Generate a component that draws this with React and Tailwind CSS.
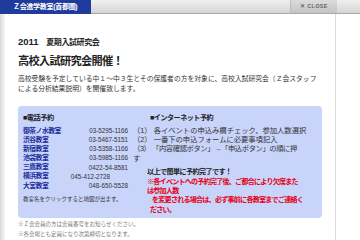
// App.jsx - Z会進学教室 summer seminar popup
import React from 'react';

const phones = [
  { name: '御茶ノ水教室', tel: '03-5295-1166', pad: 'pr-0' },
  { name: '渋谷教室', tel: '03-5467-5151', pad: 'pr-0' },
  { name: '新宿教室', tel: '03-5358-1166', pad: 'pr-0' },
  { name: '池袋教室', tel: '03-5985-1166', pad: 'pr-0' },
  { name: '三鷹教室', tel: '0422-54-8581', pad: 'pr-0' },
  { name: '横浜教室', tel: '045-412-2728', pad: 'pr-[18px]' },
  { name: '大宮教室', tel: '048-650-5528', pad: 'pr-0' },
];

const App = () => {
  return (
    <div className="w-[360px] h-[240px] overflow-hidden bg-white text-[#333] font-['Liberation_Sans','Noto_Sans_CJK_JP',sans-serif]">
      {/* Header bar */}
      <div className="flex h-[14px]">
        <div className="w-[91px] bg-[#1f3c9c] text-white text-[7px] font-bold leading-[14px] pl-[13px] whitespace-nowrap tracking-[-0.3px]">
          Ｚ会進学教室(首都圏)
        </div>
        <div className="flex-1 flex bg-gradient-to-b from-[#f0f0f0] to-[#d4d4d4] border-b border-[#a8a8a8]">
          <div className="ml-auto mr-[23px] w-[47px] bg-gradient-to-b from-[#dcdcdc] to-[#c4c4c4] border-l border-[#bcbcbc] text-[#666] text-[5.5px] font-bold leading-[13px] text-center tracking-[0.3px]">
            ✕ CLOSE
          </div>
        </div>
      </div>

      {/* Body */}
      <div className="flex h-[226px]">
        <div className="w-[5px] bg-gradient-to-r from-[#d9d9d9] to-[#f7f7f7]" />
        <div className="w-[331px] border-r border-[#dcdcdc] pl-[13px]">
          <h2 className="mt-[23px] text-[8px] leading-[10px] font-bold text-[#222] whitespace-nowrap tracking-[-0.4px]">
            <span className="text-[9.5px] tracking-normal">2011</span>　夏期入試研究会
          </h2>
          <h1 className="mt-[6px] text-[11.2px] leading-[14px] font-bold text-[#222] whitespace-nowrap tracking-[-0.7px]">
            高校入試研究会開催！
          </h1>
          <p className="mt-[6px] text-[6.8px] leading-[10px] text-[#333] whitespace-nowrap">
            高校受験を予定している中１～中３生とその保護者の方を対象に、高校入試研究会（Ｚ会スタッフ<br />
            による分析結果説明）を開催致します。
          </p>

          {/* Reservation box */}
          <div className="mt-[12px] w-[304px] h-[112px] rounded-[4px] bg-[#c9d4fa] pt-[7px] pl-[5px] flex">
            <div className="w-[105px] flex flex-col">
              <div className="text-[7.2px] leading-[10px] font-bold text-[#222] tracking-[-0.5px]">■電話予約</div>
              <div className="mt-[3px] flex flex-col">
                {phones.map((p) => (
                  <div key={p.name} className="flex items-center h-[9.2px]">
                    <span className="text-[6.8px] font-bold text-[#1b2f9e] whitespace-nowrap tracking-[-0.5px]">{p.name}</span>
                    <span className={`ml-auto text-[6.3px] text-[#333] whitespace-nowrap ${p.pad}`}>{p.tel}</span>
                  </div>
                ))}
              </div>
              <div className="mt-[5px] text-[5.5px] leading-[8px] text-[#333] whitespace-nowrap">
                教室名をクリックすると地図が出ます。
              </div>
            </div>

            <div className="ml-[5px] w-[189px] flex flex-col text-[7.1px] text-[#333] whitespace-nowrap">
              <div className="pl-[17px] leading-[10px] font-bold text-[#222] tracking-[-0.5px]">■インターネット予約</div>
              <div className="mt-[3px] leading-[9.2px] text-[7.3px]">
                <div>（1） 各イベントの申込み欄チェック、参加人数選択</div>
                <div>（2） 一番下の申込フォームに必要事項記入</div>
                <div className="tracking-[-0.4px]">（3） 「内容確認ボタン」→「申込ボタン」の順に押</div>
                <div>す</div>
              </div>
              <div className="mt-[5.5px] pl-[14px] leading-[9.3px] font-bold tracking-[-0.8px]">
                <div className="text-[#222] tracking-[-0.6px]">以上で簡単に予約完了です！</div>
                <div className="text-[#e60012]">
                  <div>※各イベントへの予約完了後、ご都合により欠席また</div>
                  <div>は参加人数</div>
                  <div className="pl-[5px]">を変更される場合は、必ず事前に各教室までご連絡く</div>
                  <div className="pl-[3px]">ださい。</div>
                </div>
              </div>
            </div>
          </div>

          {/* Notes */}
          <div className="mt-[1px] text-[5.5px] leading-[10px] text-[#777] whitespace-nowrap">
            <div>※Ｚ会会員の方は会員番号をお知らせください。</div>
            <div>※各会場とも定員になり次第締切となります。</div>
            <div>※教材は１冊目の名簿（会場によっては１冊）などをお送りいたします。</div>
          </div>
        </div>
        <div className="flex-1 bg-white" />
      </div>
    </div>
  );
};

export default App;
